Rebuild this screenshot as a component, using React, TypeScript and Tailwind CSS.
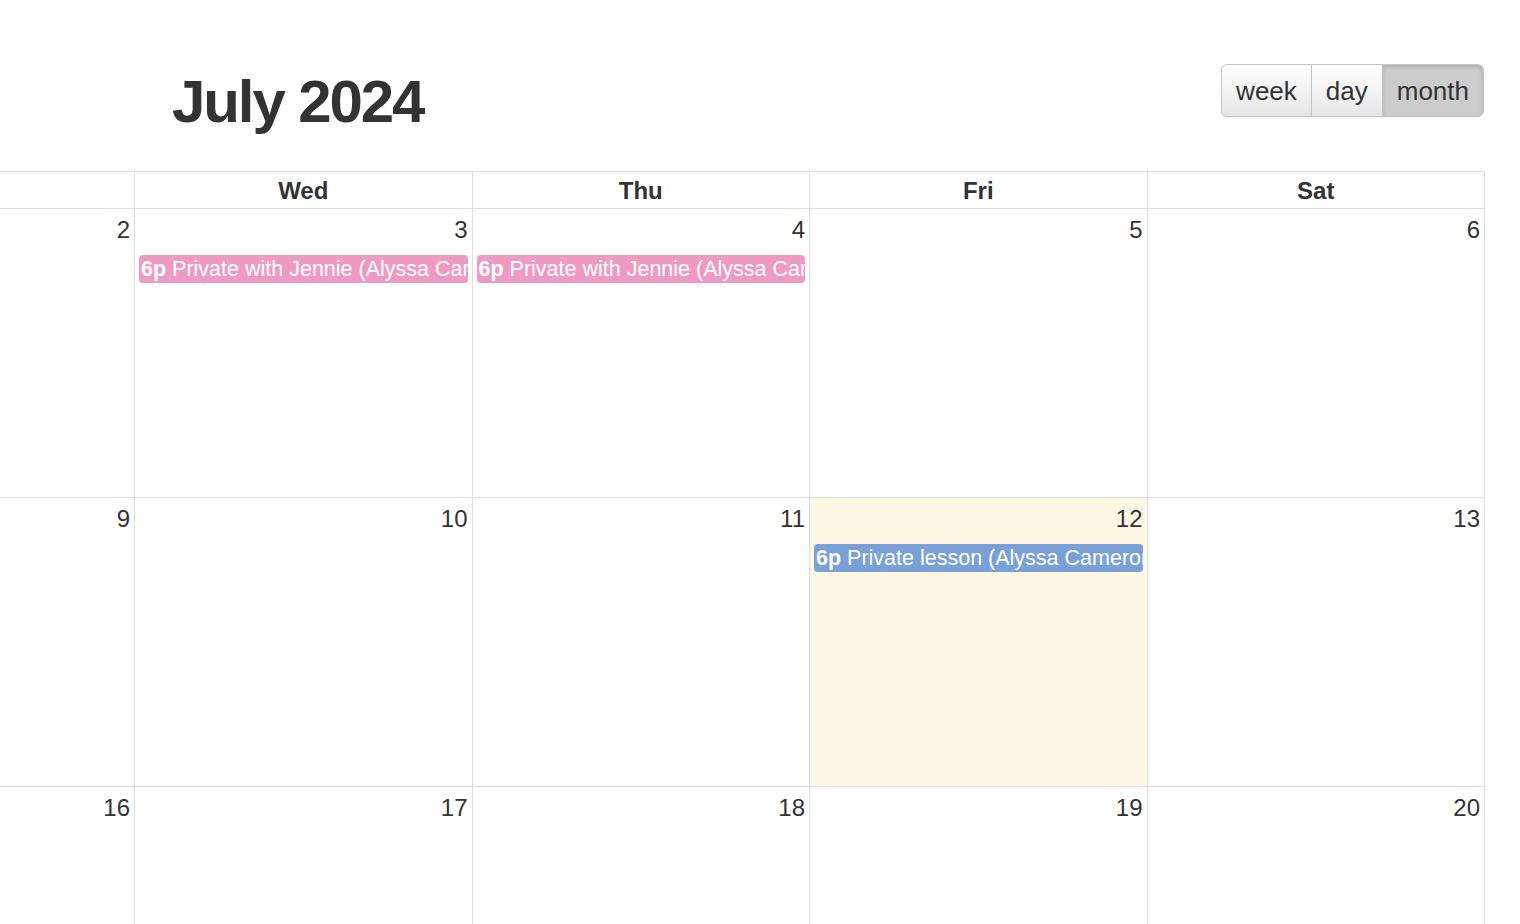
import type { ReactNode } from "react";

type CalEvent = {
  time: string;
  title: string;
  color: string;
};

type Cell = {
  day: number;
  today?: boolean;
  events?: CalEvent[];
};

const pink = "bg-[#ef9ac3]";
const blue = "bg-[#7aa0d8]";

const weeks: Cell[][] = [
  [
    { day: 2 },
    { day: 3, events: [{ time: "6p", title: "Private with Jennie (Alyssa Cameron)", color: pink }] },
    { day: 4, events: [{ time: "6p", title: "Private with Jennie (Alyssa Cameron)", color: pink }] },
    { day: 5 },
    { day: 6 },
  ],
  [
    { day: 9 },
    { day: 10 },
    { day: 11 },
    { day: 12, today: true, events: [{ time: "6p", title: "Private lesson (Alyssa Cameron)", color: blue }] },
    { day: 13 },
  ],
  [{ day: 16 }, { day: 17 }, { day: 18 }, { day: 19 }, { day: 20 }],
];

const dayNames = ["", "Wed", "Thu", "Fri", "Sat"];

function ViewButton({
  children,
  active,
  first,
  last,
}: {
  children: ReactNode;
  active?: boolean;
  first?: boolean;
  last?: boolean;
}) {
  return (
    <button
      className={[
        "h-[53px] border border-[#c4c4c4] px-[14px] text-[26px] leading-none text-[#333]",
        first ? "rounded-l-[6px]" : "-ml-px",
        last ? "rounded-r-[6px]" : "",
        active
          ? "bg-[#cccccc] shadow-[inset_0_2px_4px_rgba(0,0,0,0.15)]"
          : "bg-gradient-to-b from-white to-[#e6e6e6] shadow-[0_1px_2px_rgba(0,0,0,0.05)]",
      ].join(" ")}
    >
      {children}
    </button>
  );
}

export default function App() {
  return (
    <div className="min-h-[924px] w-[1520px] overflow-hidden bg-white font-['Liberation_Sans',Arial,sans-serif] text-[#333]">
      <div className="flex items-start justify-between pr-[36px] pt-[64px]">
        <h2 className="ml-[172px] mt-[4px] text-[60px] font-bold leading-[68px] tracking-[-0.035em]">
          July 2024
        </h2>
        <div className="flex">
          <ViewButton first>week</ViewButton>
          <ViewButton>day</ViewButton>
          <ViewButton active last>
            month
          </ViewButton>
        </div>
      </div>

      <div className="mt-[35px] w-[1485px]">
        <div className="grid grid-cols-[134px_repeat(4,minmax(0,1fr))] border-y border-r border-[#dddddd]">
          {dayNames.map((name, i) => (
            <div
              key={i}
              className={`h-[36px] text-center text-[24px] font-bold leading-[38px] ${
                i > 0 ? "border-l border-[#dddddd]" : ""
              }`}
            >
              {name}
            </div>
          ))}
        </div>

        {weeks.map((week, wi) => (
          <div
            key={wi}
            className="grid h-[289px] grid-cols-[134px_repeat(4,minmax(0,1fr))] border-b border-r border-[#dddddd]"
          >
            {week.map((cell, ci) => (
              <div
                key={ci}
                className={`min-w-0 ${ci > 0 ? "border-l border-[#dddddd]" : ""} ${
                  cell.today ? "bg-[#fdf7e3]" : ""
                }`}
              >
                <div className="pr-[4px] pt-[7px] text-right text-[24px] leading-[28px]">
                  {cell.day}
                </div>
                {cell.events?.map((ev, ei) => (
                  <div
                    key={ei}
                    className={`ml-[4px] mr-[4px] mt-[11px] h-[28px] overflow-hidden whitespace-nowrap rounded-[4px] px-[2px] text-[21.5px] leading-[28px] text-white ${ev.color}`}
                  >
                    <span className="font-bold">{ev.time}</span> {ev.title}
                  </div>
                ))}
              </div>
            ))}
          </div>
        ))}
      </div>
    </div>
  );
}
